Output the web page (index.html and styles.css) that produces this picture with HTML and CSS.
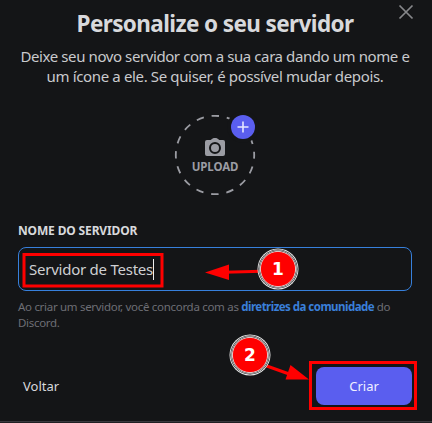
FILE: index.html
```html
<!DOCTYPE html>
<html lang="pt-BR">
<head>
<meta charset="utf-8">
<title>Personalize o seu servidor</title>
<link rel="stylesheet" href="styles.css">
</head>
<body>
<main class="modal">
  <button class="close" aria-label="Fechar"><svg width="16" height="16" viewBox="0 0 16 16"><path d="M1.5 1.5l13 13M14.5 1.5l-13 13"/></svg></button>
  <h1><span>Personalize o seu servidor</span></h1>
  <p class="intro"><span class="intro-a">Deixe seu novo servidor com a sua cara dando um nome e</span><br><span class="intro-b">um ícone a ele. Se quiser, é possível mudar depois.</span></p>
  <div class="upload">
    <svg class="ring" width="82" height="82" viewBox="0 0 82 82"><circle cx="41" cy="41" r="39.2"/></svg>
    <svg class="camera" width="20" height="18" viewBox="0 0 20 18"><path fill-rule="evenodd" d="M6.3 1.6 7.7.4Q8.2 0 8.8 0h2.4q.6 0 1.1.4l1.4 1.2q.6.5 1.3.5H18q2 0 2 2V16q0 2-2 2H2q-2 0-2-2V4.100q0-2 2-2h3q.7 0 1.300-.5ZM10 4a6 6 0 1 0 0 12 6 6 0 0 0 0-12Z"/><circle cx="10" cy="10" r="4"/></svg>
    <span class="upload-text">UPLOAD</span>
    <span class="plus"><svg width="12" height="12" viewBox="0 0 12 12"><path d="M6 .5v11M.5 6h11"/></svg></span>
  </div>
  <div class="label"><span>NOME DO SERVIDOR</span></div>
  <div class="field"><span class="value">Servidor de Testes</span><span class="caret"></span></div>
  <p class="note"><span>Ao criar um servidor, você concorda com as </span><b>diretrizes da comunidade</b><span> do</span><br><span>Discord.</span></p>
  <footer><span class="back">Voltar</span><button class="create">Criar</button></footer>
</main>
<div class="edge"></div>
<svg class="notes" width="432" height="423" viewBox="0 0 432 423">
  <g class="box"><rect x="24" y="254.500" width="138" height="31.500"/><rect x="310.500" y="362.500" width="105" height="46"/></g>
  <path class="shaft" d="M262 271.300 224 272.300M264 365l28 10"/>
  <path class="head" d="M205 272.500 229 264.500V280ZM309 379.500 285.500 379.500 290.500 365Z"/>
  <g class="badge"><circle class="white" cx="278" cy="269" r="20.500"/><circle class="black" cx="278" cy="269" r="19.600"/><circle class="white" cx="278" cy="269" r="19"/><circle class="black" cx="278" cy="269" r="18.400"/><circle class="disc" cx="278" cy="269" r="17.600"/>
  <circle class="white" cx="250" cy="355" r="20.500"/><circle class="black" cx="250" cy="355" r="19.600"/><circle class="white" cx="250" cy="355" r="19"/><circle class="black" cx="250" cy="355" r="18.400"/><circle class="disc" cx="250" cy="355" r="17.600"/>
  <text x="278" y="275">1</text><text x="250" y="361">2</text></g>
</svg>
</body>
</html>
```
FILE: styles.css
```css
* { box-sizing: border-box; }
body { margin: 0; width: 432px; height: 423px; overflow: hidden; background: #141517; color: #d8d9dc; font-family: "Noto Sans", sans-serif; }
.modal { height: 421px; padding: 9px 20px 0 18px; position: relative; display: flex; flex-direction: column; }
button { border: 0; padding: 0; font: inherit; }
.close { position: absolute; left: 398px; top: 4px; width: 16px; height: 16px; background: none; }
.close svg, .camera, .ring { display: block; }
.close path { stroke: #86878a; stroke-width: 1.7; }
h1 { margin: 0; height: 30px; font-size: 22.500px; line-height: 30px; text-align: center; letter-spacing: -.6px; white-space: nowrap; }
.intro { margin: 7px 0 1px; font-size: 15px; line-height: 20px; text-align: center; white-space: nowrap; color: #c9cacd; }
.intro-a { letter-spacing: -.41px; }
.intro-b { letter-spacing: -.36px; }
.upload { position: relative; width: 82px; height: 82px; margin: 27px auto 0 156px; display: flex; flex-direction: column; align-items: center; padding-top: 24px; }
.ring { position: absolute; inset: 0; }
.ring circle { fill: none; stroke: #9b9ca3; stroke-width: 1.8; stroke-dasharray: 7.500 7.894; stroke-dashoffset: 3.750; }
.camera { fill: #9b9ca3; }
.upload-text { margin-top: 4px; color: #9b9ca3; font-size: 11.500px; line-height: 14px; font-weight: 700; letter-spacing: -.1px; }
.plus { position: absolute; left: 57px; top: 1px; width: 24px; height: 24px; border-radius: 50%; background: #5a5eef; box-shadow: 0 0 0 4px #141517; display: grid; place-items: center; }
.plus svg { display: block; }
.plus path { stroke: #e6e7ff; stroke-width: 1.6; }
.label { margin-top: 27px; height: 16px; font-size: 12px; line-height: 16px; font-weight: 700; letter-spacing: -.15px; }
.field { margin-top: 8px; width: 394px; height: 44px; border: 1px solid #3780dc; border-radius: 8px; padding-left: 10px; display: flex; align-items: center; font-size: 15px; letter-spacing: -.24px; white-space: nowrap; color: #cfd0d3; }
.caret { width: 1px; height: 21px; background: #eee; }
.note { margin: 8px 0 0; color: #6d6e75; font-size: 11.500px; line-height: 16px; white-space: nowrap; letter-spacing: -.3px; }
.note span { white-space: pre; }
.note b { color: #3a7fd9; letter-spacing: -.53px; }
footer { margin-top: 36px; height: 38px; display: flex; align-items: center; justify-content: space-between; padding-left: 5px; font-size: 13px; }
.create { width: 96px; height: 38px; border-radius: 8px; background: #5a5eef; color: #f0f0ff; }
.edge { height: 2px; border-top: 1px solid #39393e; background: #202023; }
.notes { position: absolute; inset: 0; }
.box rect { fill: none; stroke: #f00; stroke-width: 3; }
.shaft { stroke: #f00; stroke-width: 3; }
.head, .disc { fill: #f00; }
.white { fill: #eee; }
.black { fill: #141517; }
.disc { stroke: #fff; stroke-width: .8; }
.badge text { fill: #fff; font: 700 17px "DejaVu Sans", sans-serif; text-anchor: middle; }
```
